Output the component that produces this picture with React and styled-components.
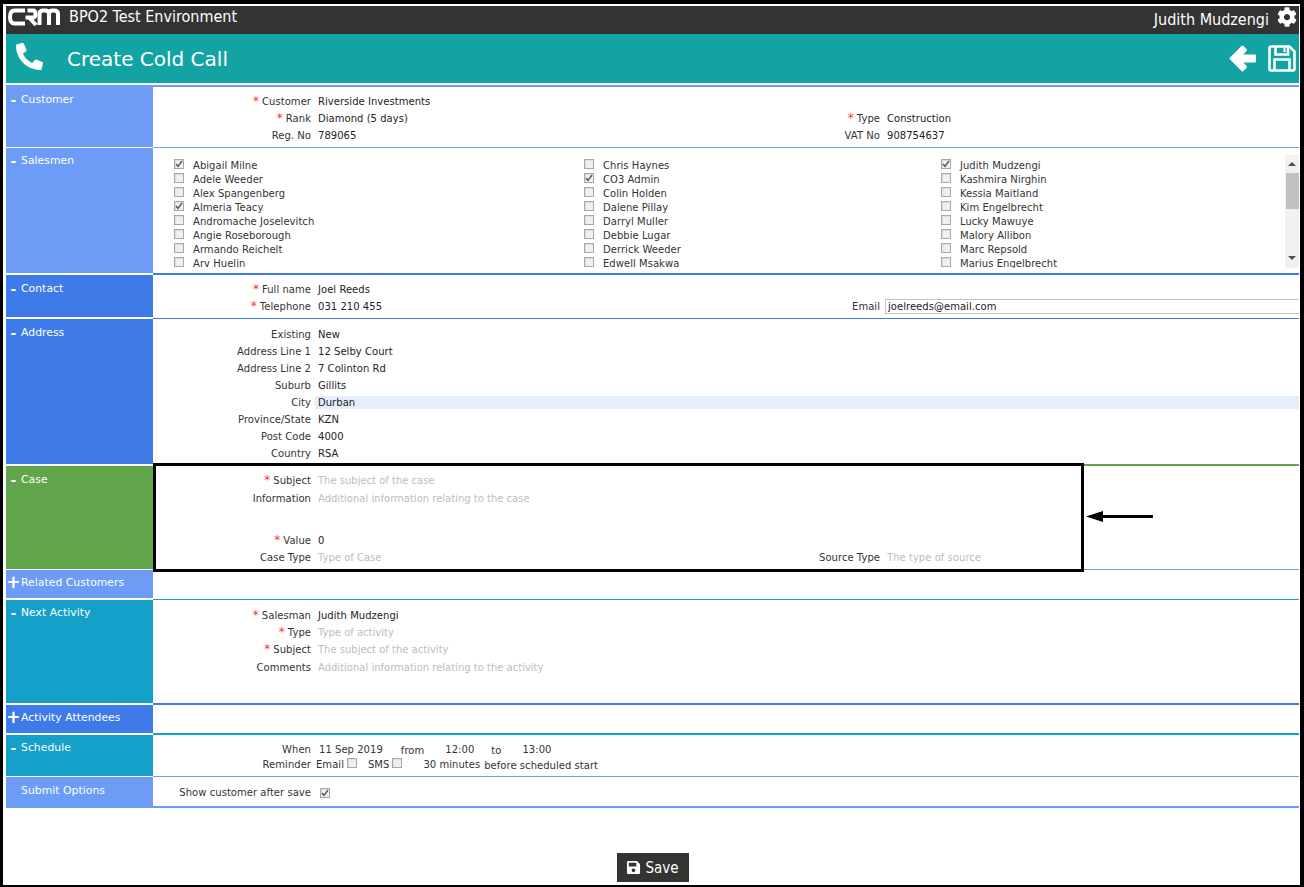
import React from 'react';
import styled, { createGlobalStyle } from 'styled-components';
import { FaPhoneAlt, FaCog, FaSave } from 'react-icons/fa';

const Global = createGlobalStyle`
  html, body { margin: 0; padding: 0; background: #fff; }
  * { box-sizing: border-box; }
`;
const Frame = styled.div`
  position: relative; width: 1304px; height: 887px; background: #fff; overflow: hidden;
  border-style: solid; border-color: #000; border-width: 4px 4px 2px 3px;
  padding: 2px 1px 0 3px; display: flex; flex-direction: column;
  font-family: "DejaVu Sans", sans-serif; font-size: 10px; letter-spacing: 0.04px; color: #222;
`;
const TopBar = styled.header`
  height: 28px; background: #333; color: #fff; display: flex; align-items: flex-start;
  justify-content: space-between; font-family: "DejaVu Sans Condensed", "DejaVu Sans", sans-serif; font-size: 16px; letter-spacing: 0;
`;
const Brand = styled.div`display: flex; align-items: center; gap: 9px; padding: 2px 0 0 2px; height: 20px; span { margin-top: -2px; }`;
const UserBox = styled.div`display: flex; align-items: center; gap: 8px; padding: 4px 2px 0 0; svg { font-size: 20px; margin-top: -6px; }`;
const TitleBar = styled.div`
  height: 49px; background: #14a3a3; color: #fff; display: flex; align-items: center; justify-content: space-between;
  padding: 0 3px 0 10px;
`;
const TitleLeft = styled.div`display: flex; align-items: center; gap: 24px; svg { font-size: 27px; margin-top: -4px; }`;
const Title = styled.h1`margin: 0; font: 500 20px "DejaVu Sans", sans-serif; letter-spacing: 0;`;
const TitleActions = styled.div`display: flex; align-items: center; gap: 12px; svg { display: block; }`;
const Sections = styled.div`display: flex; flex-direction: column; margin-top: 2px;`;
const Section = styled.section`
  display: grid; grid-template-columns: 147px 1fr; height: ${p => p.$h}px;
`;
const SectionLabel = styled.div`
  background: ${p => p.$c}; color: #fff; font-weight: 500; padding-top: ${p => p.$pt ?? 9}px; display: flex; align-items: flex-start;
  font-size: 10.8px; line-height: 12px; margin-top: ${p => p.$mt ?? 0}px; margin-bottom: ${p => p.$mb ?? 0}px;
`;
const Toggle = styled.span`width: 15px; text-align: center; flex: none; font-weight: 700; font-size: ${p => p.$big ? 17 : 14}px; padding-left: ${p => p.$big ? 0 : 0}px; position: relative; top: ${p => p.$big ? -1 : 0}px;`;
const SectionBody = styled.div`
  position: relative; min-width: 0;
  border-top: ${p => p.$top ? `${p.$tw ?? 2}px solid ${p.$top}` : 'none'};
  border-bottom: ${p => p.$bot ? `${p.$bw ?? 1}px solid ${p.$bot}` : 'none'};
  padding-top: ${p => p.$pt ?? 0}px;
`;
const Field = styled.div`
  display: grid; grid-template-columns: 158px 1fr; column-gap: 7px; height: ${p => p.$h ?? 17}px; align-items: center; white-space: nowrap;
`;
const Label = styled.div`text-align: right; color: #333;`;
const Star = styled.span`color: #f33; margin-right: 3px; font-size: 12px; line-height: 10px;`;
const Value = styled.div`
  color: ${p => p.$muted ? '#bdbdbd' : '#222'}; background: ${p => p.$hl ? '#e6eefb' : 'transparent'};
  letter-spacing: ${p => p.$muted ? 0 : 0.04}px;
  height: ${p => p.$hl ? '13px' : '100%'}; display: flex; align-items: center;
  margin-left: ${p => p.$hl ? -3 : 0}px; padding-left: ${p => p.$hl ? 3 : 0}px;
`;
const PairRow = styled.div`display: flex; min-width: 0; align-items: center; height: 100%;`;
const FirstValue = styled(Value)`width: 562px; flex: none;`;
const PairLabel = styled.div`width: 0; flex: none; display: flex; justify-content: flex-end; white-space: nowrap; color: #333;`;
const PairValue = styled.div`margin-left: 7px; color: ${p => p.$muted ? '#bdbdbd' : '#222'};`;
const EmailInput = styled.div`flex: 1; margin: -1px 0 0 5px; height: 15px; border-top: 1px solid #c4c4c4; border-bottom: 1px solid #c4c4c4; border-left: 1px solid #c4c4c4; padding-left: 2px; line-height: 14px; color: #222;`;
const ListWrap = styled.div`display: flex; height: 113px; margin-top: 7px;`;
const List = styled.div`flex: 1; display: grid; grid-template-columns: 410px 357px 1fr; overflow: hidden; height: 113px; padding-top: 3px; min-width: 0;`;
const ListCol = styled.div`display: flex; flex-direction: column; padding-left: 21px;`;
const Item = styled.div`height: 14px; flex: none; display: flex; align-items: center; gap: 9px; color: #333; white-space: nowrap;`;
const Box = styled.span`
  width: 10px; height: 10px; flex: none; border: 1px solid #a8a8a8; background: #f0f0f0; display: inline-flex; align-items: center; justify-content: center;
  box-shadow: inset 1px 1px 1px #ddd; margin-top: ${p => p.$mt ?? -2}px; margin-left: ${p => p.$ml ?? 0}px; svg { display: block; }
`;
const Scrollbar = styled.div`width: 14px; height: 113px; background: #f1f1f1; display: flex; flex-direction: column; align-items: center; flex: none; padding-top: 7px;`;
const Thumb = styled.div`width: 13px; height: 36px; background: #c1c1c1; margin-top: 7px;`;
const UpTri = styled.div`width: 0; height: 0; border: 4px solid transparent; border-top: 0; border-bottom: 4px solid #505050;`;
const DownTri = styled.div`width: 0; height: 0; border: 4px solid transparent; border-bottom: 0; border-top: 4px solid #505050; margin-top: auto; margin-bottom: 8px;`;
const SchedRow = styled.div`display: flex; align-items: center; height: ${p => p.$h}px; white-space: nowrap; color: #333;`;
const Cell = styled.span`flex: none; width: ${p => p.$w ? p.$w + 'px' : 'auto'}; text-align: ${p => p.$right ? 'right' : 'left'}; margin-left: ${p => p.$ml ?? 0}px; position: relative; top: ${p => p.$top ?? 0}px;`;
const Spacer = styled.div`height: ${p => p.$h}px;`;
const Foot = styled.div`flex: 1; display: flex; justify-content: center; align-items: flex-end;`;
const SaveButton = styled.button`
  height: 29px; width: 72px; border: 0; background: #333; color: #fff; display: flex; align-items: center; justify-content: center; gap: 4px;
  font: 15px "DejaVu Sans Condensed", "DejaVu Sans", sans-serif; padding: 0; margin-bottom: 3px; svg { font-size: 15px; }
`;
const Callout = styled.div`position: absolute; left: 150px; top: 459px; width: 931px; height: 109px; border: 3px solid #000; pointer-events: none;`;
const CalloutArrow = styled.svg`position: absolute; left: 1083px; top: 506px;`;

const Logo = () => (
  <svg width="52" height="18" viewBox="0 0 52 18" fill="none" stroke="#fff" strokeWidth="4">
    <path d="M17 2.5H6.5Q2 2.5 2 9T6.5 15.5H17" />
    <path d="M17.5 9.5H25Q27.5 9.5 27.5 6T25 2.5H19.5M21 9.5L28 17" />
    <path d="M31.5 17V6Q31.5 2.5 35 2.5H37Q41 2.5 41 6V17M41 6Q41 2.5 44.5 2.5H46Q50 2.5 50 6V17" />
  </svg>
);
const BackArrow = () => (
  <svg width="27" height="27" viewBox="0 0 27 27" fill="#fff" stroke="#fff" strokeWidth="2" strokeLinejoin="round">
    <path d="M1.5 13.5L13.5 1.5L17 5L12 10.5H26V16.5H12L17 22L13.5 25.5Z" />
  </svg>
);
const DiskOutline = () => (
  <svg width="28" height="27" viewBox="0 0 28 27" fill="none" stroke="#fff" strokeWidth="2.6">
    <path d="M1.5 3Q1.5 1.5 3 1.5H21.5L26.5 6.5V24Q26.5 25.5 25 25.5H3Q1.5 25.5 1.5 24Z" />
    <path d="M7.5 2V9.5H20V2" />
    <path d="M16.5 3V7" strokeWidth="2" />
    <path d="M6.5 25V14.5H21.5V25" />
  </svg>
);
const Check = () => (
  <svg width="8" height="8" viewBox="0 0 8 8" fill="none" stroke="#555" strokeWidth="1.4"><path d="M1 4l2 2.3L7 1" /></svg>
);
const CB = ({ on }) => <Box>{on && <Check />}</Box>;

const cols = [
  [['Abigail Milne', 1], ['Adele Weeder'], ['Alex Spangenberg'], ['Almeria Teacy', 1], ['Andromache Joselevitch'], ['Angie Roseborough'], ['Armando Reichelt'], ['Arv Huelin']],
  [['Chris Haynes'], ['CO3 Admin', 1], ['Colin Holden'], ['Dalene Pillay'], ['Darryl Muller'], ['Debbie Lugar'], ['Derrick Weeder'], ['Edwell Msakwa']],
  [['Judith Mudzengi', 1], ['Kashmira Nirghin'], ['Kessia Maitland'], ['Kim Engelbrecht'], ['Lucky Mawuye'], ['Malory Allibon'], ['Marc Repsold'], ['Marius Engelbrecht']],
];

const F = ({ label, req, value, muted, hl, h }) => (
  <Field $h={h}>
    <Label>{req && <Star>*</Star>}{label}</Label>
    <Value $muted={muted} $hl={hl}>{value}</Value>
  </Field>
);
const F2 = ({ label, req, value, muted, label2, req2, value2, muted2, email, h }) => (
  <Field $h={h}>
    <Label>{req && <Star>*</Star>}{label}</Label>
    <PairRow>
      <FirstValue $muted={muted}>{value}</FirstValue>
      {email
        ? <><PairLabel>Email</PairLabel><EmailInput>{email}</EmailInput></>
        : <><PairLabel>{req2 && <Star>*</Star>}{label2}</PairLabel><PairValue $muted={muted2}>{value2}</PairValue></>}
    </PairRow>
  </Field>
);

const BLUE_L = '#6c9cf5', BLUE_D = '#3f7be8', GREEN = '#62a64b', CYAN = '#14a0c8';

export default function App() {
  return (
    <Frame>
      <Global />
      <TopBar>
        <Brand><Logo /><span>BPO2 Test Environment</span></Brand>
        <UserBox><span>Judith Mudzengi</span><FaCog /></UserBox>
      </TopBar>
      <TitleBar>
        <TitleLeft><FaPhoneAlt /><Title>Create Cold Call</Title></TitleLeft>
        <TitleActions><BackArrow /><DiskOutline /></TitleActions>
      </TitleBar>
      <Sections>
        <Section $h={63}>
          <SectionLabel $c={BLUE_L} $pt={9} $mb={1}><Toggle>-</Toggle>Customer</SectionLabel>
          <SectionBody $top={BLUE_L} $pt={6} $bot={BLUE_L}>
            <F req label="Customer" value="Riverside Investments" />
            <F2 req label="Rank" value="Diamond (5 days)" req2 label2="Type" value2="Construction" />
            <F2 label="Reg. No" value="789065" label2="VAT No" value2="908754637" />
          </SectionBody>
        </Section>
        <Section $h={127}>
          <SectionLabel $c={BLUE_L} $pt={7} $mb={2}><Toggle>-</Toggle>Salesmen</SectionLabel>
          <SectionBody $bot={BLUE_D} $bw={2}>
            <ListWrap>
              <List>
                {cols.map((c, i) => (
                  <ListCol key={i}>
                    {c.map(([n, on]) => <Item key={n}><CB on={on} />{n}</Item>)}
                  </ListCol>
                ))}
              </List>
              <Scrollbar><UpTri /><Thumb /><DownTri /></Scrollbar>
            </ListWrap>
          </SectionBody>
        </Section>
        <Section $h={44}>
          <SectionLabel $c={BLUE_D} $pt={8} $mb={2}><Toggle>-</Toggle>Contact</SectionLabel>
          <SectionBody $pt={6} $bot={BLUE_D}>
            <F req label="Full name" value="Joel Reeds" />
            <F2 req label="Telephone" value="031 210 455" email="joelreeds@email.com" />
          </SectionBody>
        </Section>
        <Section $h={145}>
          <SectionLabel $c={BLUE_D} $pt={8}><Toggle>-</Toggle>Address</SectionLabel>
          <SectionBody $pt={7}>
            <F label="Existing" value="New" />
            <F label="Address Line 1" value="12 Selby Court" />
            <F label="Address Line 2" value="7 Colinton Rd" />
            <F label="Suburb" value="Gillits" />
            <F label="City" value="Durban" hl />
            <F label="Province/State" value="KZN" />
            <F label="Post Code" value="4000" />
            <F label="Country" value="RSA" />
          </SectionBody>
        </Section>
        <Section $h={106}>
          <SectionLabel $c={GREEN} $pt={8} $mt={2} $mb={1}><Toggle>-</Toggle>Case</SectionLabel>
          <SectionBody $top={GREEN} $pt={6} $bot={BLUE_L}>
            <F req label="Subject" value="The subject of the case" muted />
            <F label="Information" value="Additional information relating to the case" muted h={19} />
            <Spacer $h={24} />
            <F req label="Value" value="0" />
            <F2 label="Case Type" value="Type of Case" muted label2="Source Type" value2="The type of source" muted2 />
          </SectionBody>
        </Section>
        <Section $h={30}>
          <SectionLabel $c={BLUE_L} $pt={7} $mb={2}><Toggle $big>+</Toggle>Related Customers</SectionLabel>
          <SectionBody $bot={CYAN} />
        </Section>
        <Section $h={105}>
          <SectionLabel $c={CYAN} $pt={7} $mb={2}><Toggle>-</Toggle>Next Activity</SectionLabel>
          <SectionBody $pt={7} $bot={BLUE_D} $bw={2}>
            <F req label="Salesman" value="Judith Mudzengi" />
            <F req label="Type" value="Type of activity" muted />
            <F req label="Subject" value="The subject of the activity" muted />
            <F label="Comments" value="Additional information relating to the activity" muted h={19} />
          </SectionBody>
        </Section>
        <Section $h={30}>
          <SectionLabel $c={BLUE_D} $pt={7} $mb={2}><Toggle $big>+</Toggle>Activity Attendees</SectionLabel>
          <SectionBody $bot={CYAN} $bw={2} />
        </Section>
        <Section $h={42}>
          <SectionLabel $c={CYAN} $pt={7} $mb={1}><Toggle>-</Toggle>Schedule</SectionLabel>
          <SectionBody $pt={7} $bot={BLUE_L}>
            <SchedRow $h={15}>
              <Cell $w={158} $right>When</Cell>
              <Cell $ml={8}>11 Sep 2019</Cell>
              <Cell $ml={18} $top={1}>from</Cell>
              <Cell $ml={21}>12:00</Cell>
              <Cell $ml={17} $top={1}>to</Cell>
              <Cell $ml={21}>13:00</Cell>
            </SchedRow>
            <SchedRow $h={15}>
              <Cell $w={158} $right>Reminder</Cell>
              <Cell $ml={5}>Email</Cell>
              <Box $ml={3} $mt={-4} />
              <Cell $ml={11}>SMS</Cell>
              <Box $ml={3} $mt={-4} />
              <Cell $ml={21}>30 minutes</Cell>
              <Cell $ml={4} $top={1}>before scheduled start</Cell>
            </SchedRow>
          </SectionBody>
        </Section>
        <Section $h={31}>
          <SectionLabel $c={BLUE_L} $pt={8}><Toggle />Submit Options</SectionLabel>
          <SectionBody $pt={8} $bot={BLUE_L} $bw={2}>
            <SchedRow $h={15}>
              <Cell $w={158} $right>Show customer after save</Cell>
              <Box $ml={9} $mt={0}><Check /></Box>
            </SchedRow>
          </SectionBody>
        </Section>
      </Sections>
      <Foot><SaveButton type="button"><FaSave />Save</SaveButton></Foot>
      <Callout />
      <CalloutArrow width="68" height="13" viewBox="0 0 68 13">
        <path d="M0 6.5L17 1V5H67V8H17V12Z" fill="#000" />
      </CalloutArrow>
    </Frame>
  );
}
